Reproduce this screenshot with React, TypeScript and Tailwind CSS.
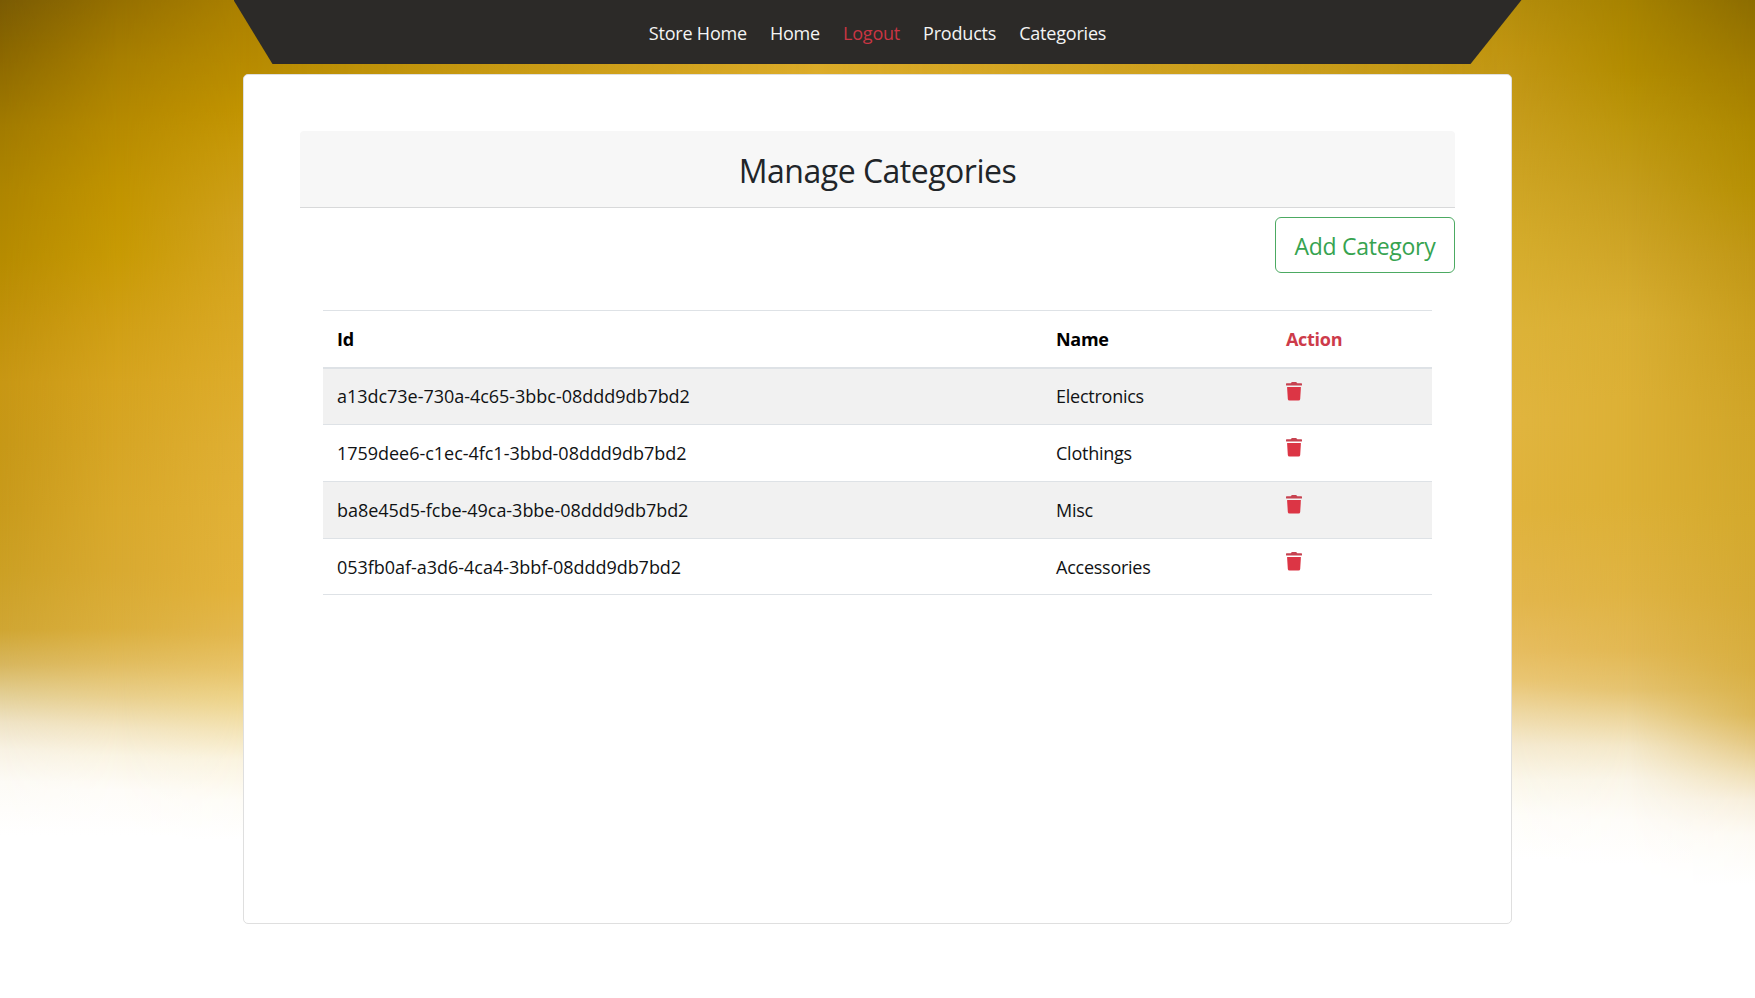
import React from "react";

const links = [
  { label: "Store Home", color: "text-[#f4f4f4]" },
  { label: "Home", color: "text-[#f4f4f4]" },
  { label: "Logout", color: "text-[#c93543]" },
  { label: "Products", color: "text-[#f4f4f4]" },
  { label: "Categories", color: "text-[#f4f4f4]" },
];

const categories = [
  { id: "a13dc73e-730a-4c65-3bbc-08ddd9db7bd2", name: "Electronics" },
  { id: "1759dee6-c1ec-4fc1-3bbd-08ddd9db7bd2", name: "Clothings" },
  { id: "ba8e45d5-fcbe-49ca-3bbe-08ddd9db7bd2", name: "Misc" },
  { id: "053fb0af-a3d6-4ca4-3bbf-08ddd9db7bd2", name: "Accessories" },
];

/* Each band is a vertical colour ramp that peaks at `x` and cross-fades into its neighbours. */
const bands: { x: number; stops: [string, number][] }[] = [
  {
    x: 0,
    stops: [["#7a5b04", 0], ["#8d6900", 60], ["#a27b00", 127], ["#ae8500", 190], ["#b68b00", 255], ["#c0910a", 320], ["#c89714", 382], ["#c79817", 445], ["#c99b1c", 510], ["#cca024", 570], ["#d0a633", 630], ["#d8b75f", 665], ["#e3cf95", 695], ["#efe3c5", 722], ["#f8f2e4", 750], ["#fdfbf6", 782], ["#ffffff", 835]],
  },
  {
    x: 120,
    stops: [["#967000", 0], ["#a87f00", 60], ["#b78b00", 127], ["#c19400", 190], ["#c89a04", 255], ["#d09f14", 320], ["#d6a41f", 382], ["#d7a625", 445], ["#d9a92b", 510], ["#d9aa31", 570], ["#dbaf3d", 628], ["#e1bc5e", 662], ["#e9cf8c", 696], ["#f3e5c2", 728], ["#faf4e3", 756], ["#fefcf8", 790], ["#ffffff", 835]],
  },
  {
    x: 243,
    stops: [["#aa8000", 0], ["#b68a00", 60], ["#c19300", 110], ["#c89a0a", 150], ["#d0a11c", 220], ["#d8a722", 300], ["#ddac2b", 382], ["#dfaf33", 445], ["#e1b137", 510], ["#e3b33c", 590], ["#e3b84f", 635], ["#e8c469", 670], ["#eed68f", 703], ["#f4e5ba", 733], ["#faf3df", 760], ["#fefcf6", 800], ["#ffffff", 840]],
  },
  {
    x: 820,
    stops: [["#d8a520", 0], ["#dcac2a", 75], ["#e2b43c", 600], ["#ffffff", 840]],
  },
  {
    x: 1512,
    stops: [["#b48d0c", 0], ["#bf9410", 50], ["#c49918", 95], ["#cca221", 160], ["#d5ac2b", 240], ["#ddb338", 330], ["#e1b53f", 420], ["#e0b33c", 510], ["#e3b64c", 600], ["#e7bd60", 650], ["#eac674", 680], ["#eed7a0", 710], ["#f5ead0", 745], ["#fbf7ea", 780], ["#fefdf9", 815], ["#ffffff", 860]],
  },
  {
    x: 1630,
    stops: [["#a68200", 0], ["#b28c00", 70], ["#bc960c", 127], ["#c59d1c", 190], ["#cfa527", 255], ["#d8ae32", 320], ["#dcb035", 400], ["#dcb035", 500], ["#dfb342", 590], ["#e2b853", 650], ["#e5c370", 690], ["#ecd59b", 717], ["#f4e8c9", 747], ["#faf5e8", 780], ["#fefcf8", 820], ["#ffffff", 865]],
  },
  {
    x: 1755,
    stops: [["#8c6c00", 0], ["#a17c00", 70], ["#ad8800", 127], ["#b69004", 190], ["#c09715", 255], ["#ca9f1f", 330], ["#d0a528", 420], ["#d3a92d", 520], ["#d5aa35", 600], ["#d8af42", 670], ["#dcb859", 715], ["#e4c780", 742], ["#eedcaf", 771], ["#f7eedb", 800], ["#fdfaf3", 835], ["#ffffff", 885]],
  },
];

function Backdrop() {
  return (
    <div className="absolute inset-0 z-0">
      {bands.map((band, i) => {
        const ramp = band.stops.map(([c, y]) => `${c} ${y}px`).join(", ");
        const from = i === 0 ? 0 : bands[i - 1].x;
        const mask = i === 0 ? undefined : `linear-gradient(90deg, transparent ${from}px, #000 ${band.x}px)`;
        return (
          <div
            key={band.x}
            className="absolute inset-0"
            style={{ backgroundImage: `linear-gradient(180deg, ${ramp})`, maskImage: mask, WebkitMaskImage: mask }}
          />
        );
      })}
    </div>
  );
}

function TrashIcon() {
  return (
    <svg width="16" height="19" viewBox="0 0 16 19" fill="#dc3545" className="block">
      <path d="M0.6 1.3H4.7L5.3 0.5Q5.6 0.1 6.1 0.1H9.9Q10.4 0.1 10.7 0.5L11.3 1.3H15.4Q16 1.3 16 1.9V3Q16 3.5 15.4 3.5H0.6Q0 3.5 0 3V1.9Q0 1.3 0.6 1.3Z" fill="#c74250" />
      <path d="M1.1 5H14.9L14.2 17Q14.1 18.6 12.5 18.6H3.5Q1.9 18.6 1.8 17Z" />
    </svg>
  );
}

export default function App() {
  return (
    <div className="relative h-[998px] w-[1755px] overflow-hidden bg-white font-['Open_Sans','Noto_Sans',sans-serif] text-[18px] text-[#101214]">
      <Backdrop />
      <div className="relative z-10 flex flex-col items-center">
        <nav className="flex h-16 w-[1288px] items-center justify-center gap-[23px] bg-[#2c2a28] pt-px leading-7 tracking-[-0.2px] [clip-path:polygon(0_0,100%_0,1237px_100%,39px_100%)]">
          {links.map((l) => (
            <a key={l.label} className={l.color}>
              {l.label}
            </a>
          ))}
        </nav>
        <main className="mt-[10px] h-[850px] w-[1269px] rounded-[5px] border border-[#dfdfdf] bg-white px-[56px] pt-[56px]">
          <header className="flex h-[77px] items-center justify-center rounded-t-[4px] border-b border-[#d8d9da] bg-[#f7f7f7]">
            <h1 className="pt-[3px] text-[32px] leading-10 tracking-[-0.5px] text-[#212529]">Manage Categories</h1>
          </header>
          <div className="flex justify-end pt-[9px]">
            <button className="h-[56px] w-[180px] rounded-[6px] border border-[#4caa62] pt-px text-[23px] leading-8 tracking-[-0.28px] text-[#36a350]">
              Add Category
            </button>
          </div>
          <div className="px-[23px] pt-[37px]">
            <table className="w-full table-fixed border-collapse text-left leading-7">
              <colgroup>
                <col className="w-[719px]" />
                <col className="w-[230px]" />
                <col />
              </colgroup>
              <thead>
                <tr className="h-[57px] border-t border-b-2 border-t-[#dee2e6] border-b-[#dee2e6] tracking-[-0.3px]">
                  <th className="px-[14px] pt-px font-bold text-black">Id</th>
                  <th className="px-[14px] pt-px font-bold text-black">Name</th>
                  <th className="px-[14px] pt-px font-bold text-[#cd3b4a]">Action</th>
                </tr>
              </thead>
              <tbody>
                {categories.map((c) => (
                  <tr key={c.id} className="h-[57px] border-b border-[#dee2e6] last:h-[56px] odd:bg-[#f1f1f1]">
                    <td className="px-[14px] tracking-[-0.03px]">{c.id}</td>
                    <td className="px-[14px] tracking-[-0.25px]">{c.name}</td>
                    <td className="px-[14px] pt-[13px] align-top">
                      <TrashIcon />
                    </td>
                  </tr>
                ))}
              </tbody>
            </table>
          </div>
        </main>
      </div>
    </div>
  );
}
